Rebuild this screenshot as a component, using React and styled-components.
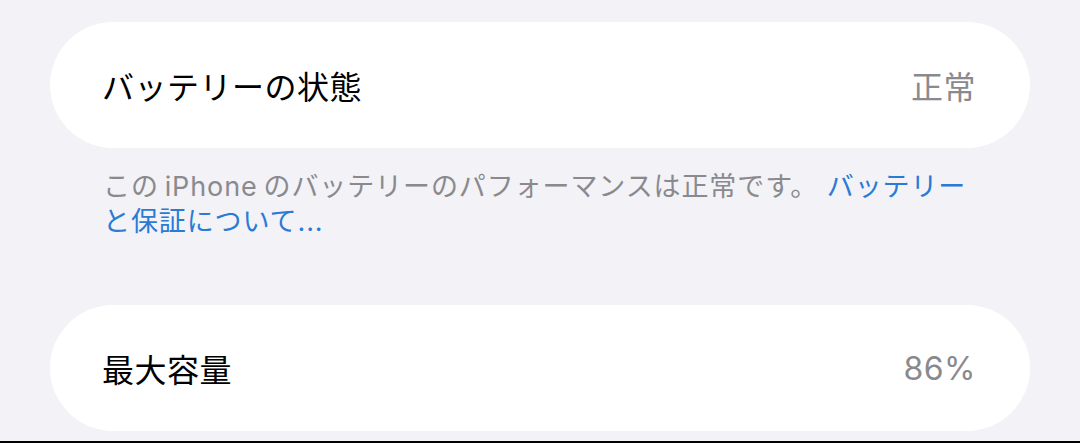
import React from "react";
import styled, { createGlobalStyle } from "styled-components";

const GlobalStyle = createGlobalStyle`
  html, body {
    margin: 0;
    padding: 0;
    background: #f2f2f7;
  }
  body {
    font-family: Inter, "Noto Sans CJK JP", sans-serif;
    -webkit-font-smoothing: antialiased;
  }
`;

const Page = styled.div`
  box-sizing: border-box;
  height: 443px;
  padding: 22px 50px 0;
  background: #f2f2f7;
  border-bottom: 2px solid #000;
  overflow: hidden;
`;

const Section = styled.section`
  margin-bottom: ${(p) => p.$gap || 0}px;
`;

const Cell = styled.div`
  display: flex;
  align-items: center;
  justify-content: space-between;
  height: 126px;
  padding: 0 54px 0 52px;
  background: #fff;
  border-radius: 63px;
`;

const Label = styled.span`
  font-size: 32px;
  color: #000;
  letter-spacing: 0.5px;
`;

const Value = styled.span`
  font-size: 32px;
  color: #8a8a8e;
  letter-spacing: 0.5px;
`;

const Footer = styled.p`
  margin: 0;
  padding: 21px 55px 0 53px;
  font-size: 27px;
  line-height: 35px;
  letter-spacing: 0.9px;
  color: #8a8a8e;
`;

const Link = styled.a`
  color: #2a7ad6;
  text-decoration: none;
`;

export default function App() {
  return (
    <>
      <GlobalStyle />
      <Page>
        <Section $gap={66}>
          <Cell>
            <Label>バッテリーの状態</Label>
            <Value>正常</Value>
          </Cell>
          <Footer>
            この{"\u2009"}iPhone{"\u2009"}のバッテリーのパフォーマンスは正常です。{" "}
            <Link href="#">バッテリーと保証について...</Link>
          </Footer>
        </Section>
        <Section>
          <Cell>
            <Label>最大容量</Label>
            <Value>86%</Value>
          </Cell>
        </Section>
      </Page>
    </>
  );
}
